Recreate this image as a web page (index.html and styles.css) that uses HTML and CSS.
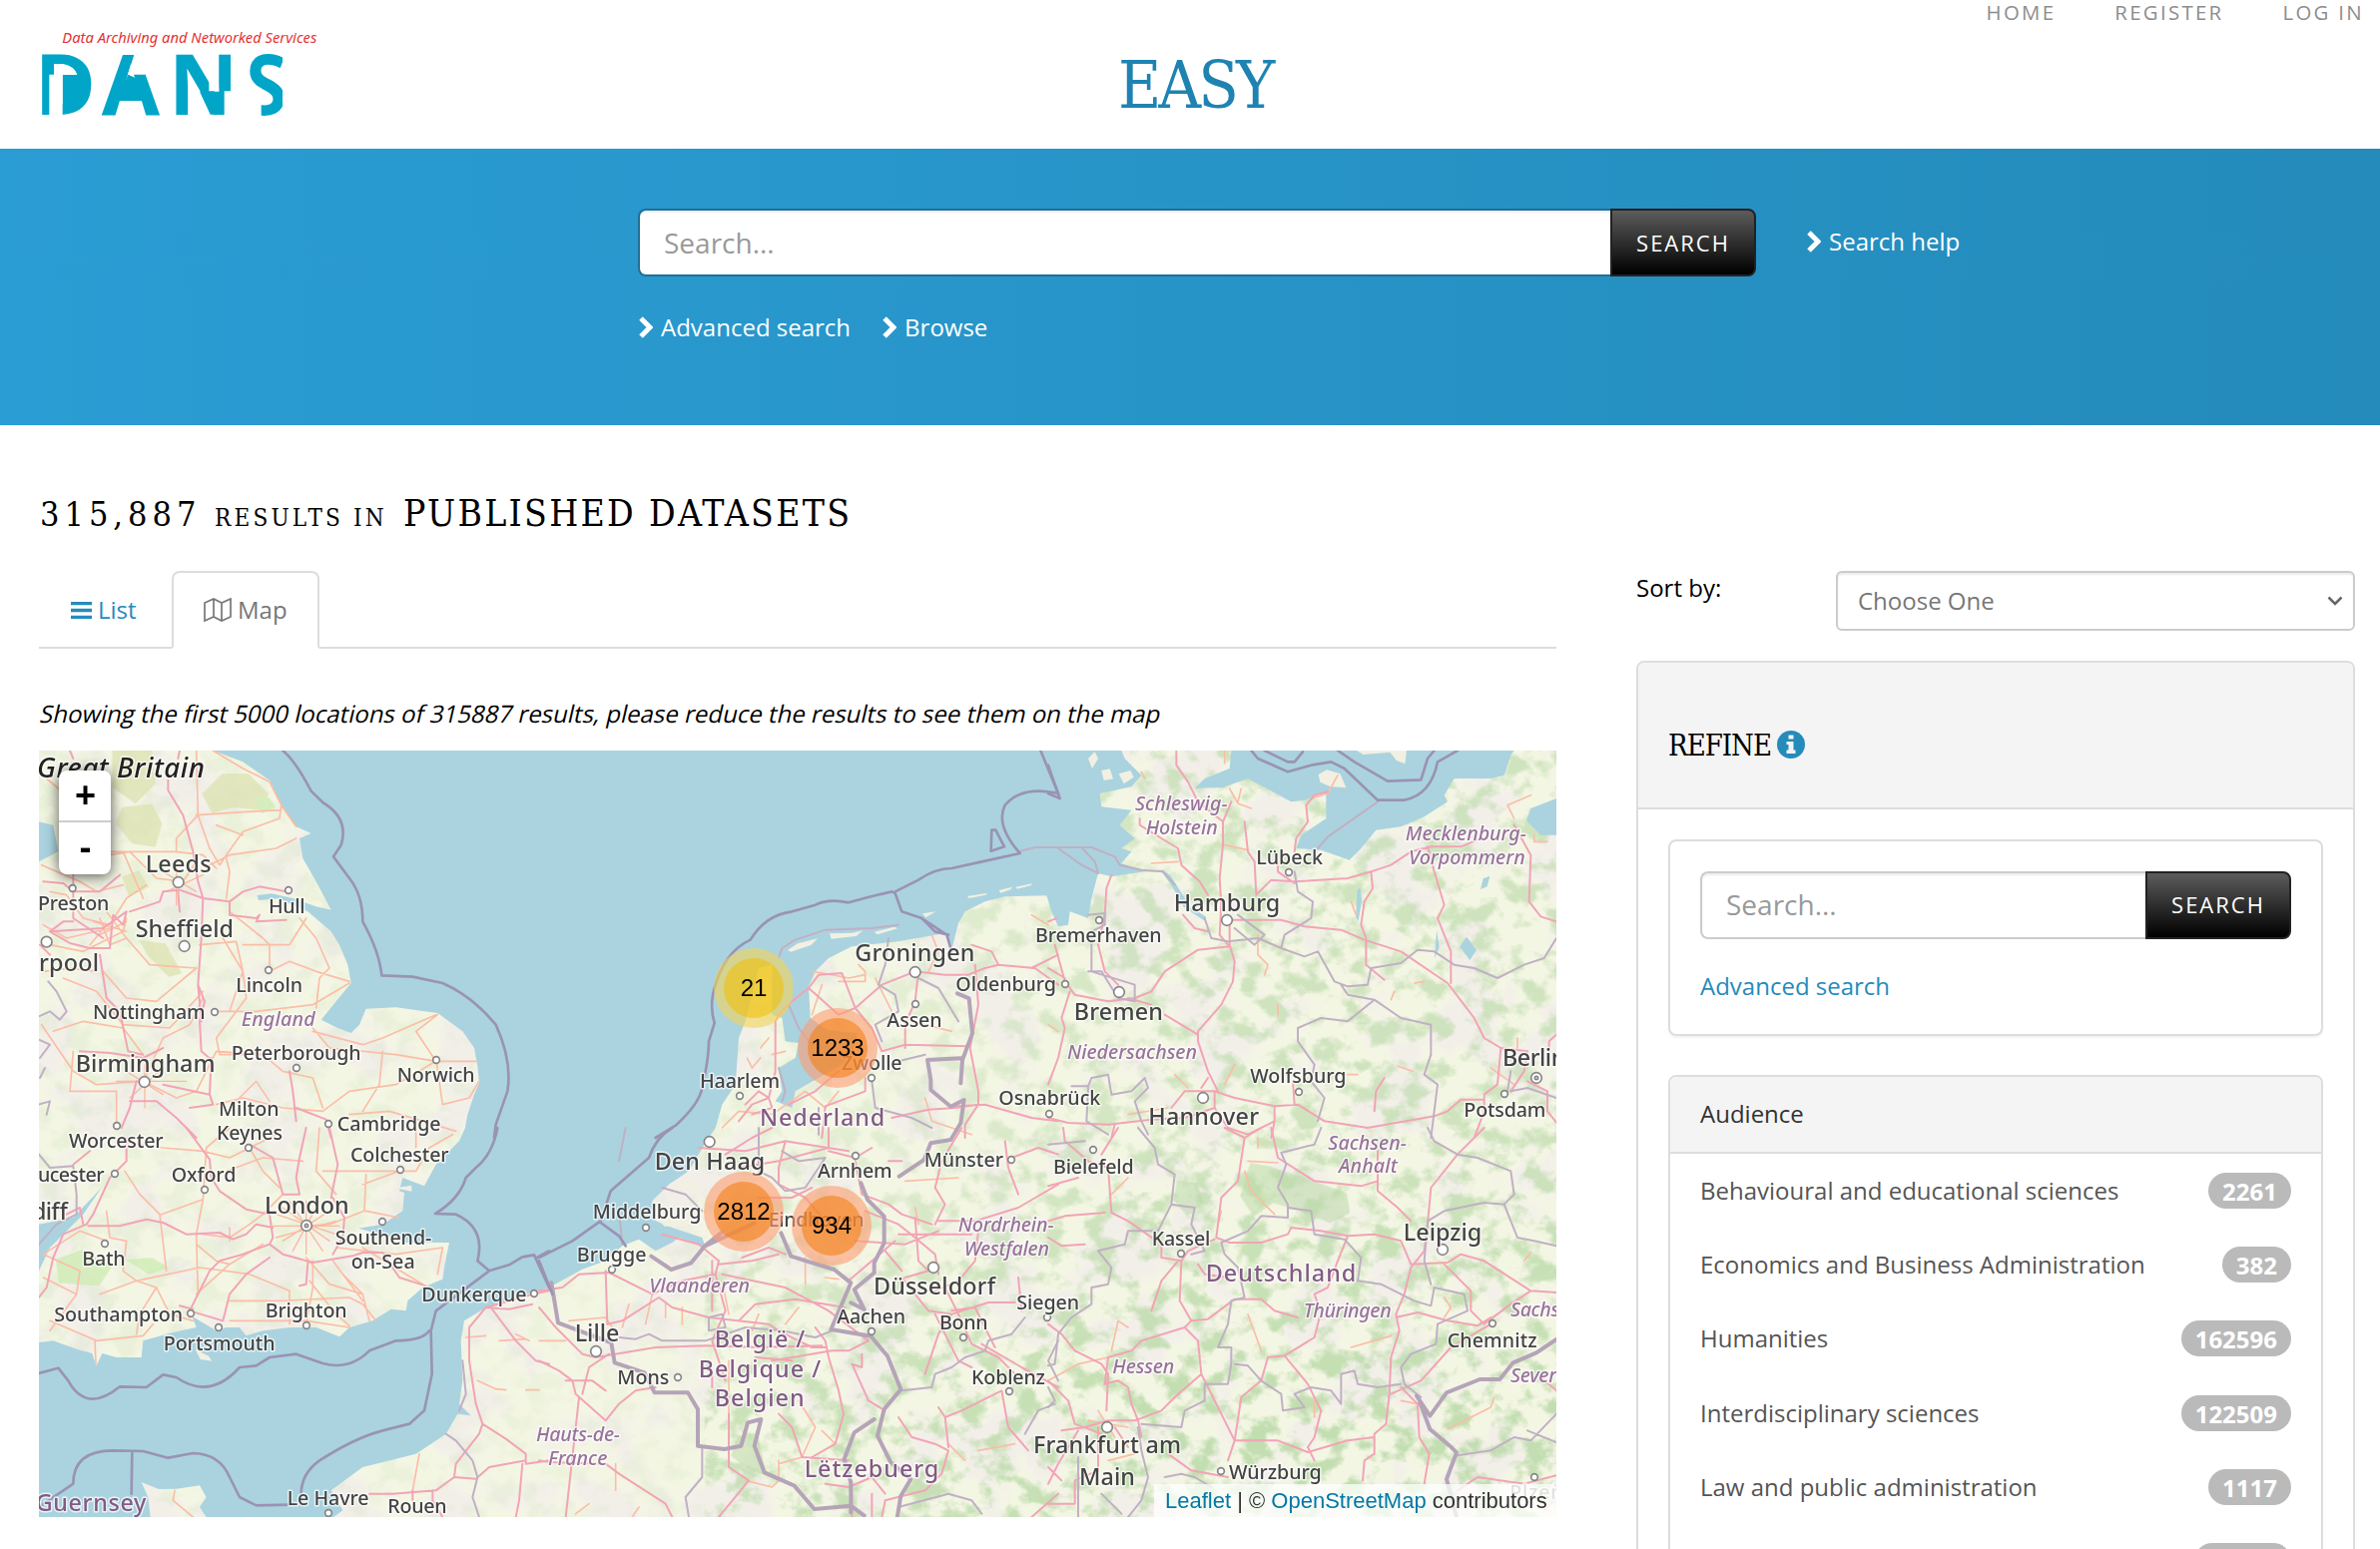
FILE: index.html
```html
<!DOCTYPE html>
<html lang="en">
<head>
<meta charset="utf-8">
<title>EASY - Published datasets</title>
<link rel="stylesheet" href="styles.css">
</head>
<body>
<header class="site-header">
  <svg class="dans" viewBox="0 0 1200 450" role="img" aria-label="DANS">
    <text class="dans-tag" x="187" y="130" textLength="765" lengthAdjust="spacingAndGlyphs">Data Archiving and Networked Services</text>
    <g class="dans-word">
      <text x="104" y="345" textLength="184" lengthAdjust="spacingAndGlyphs">D</text>
      <text x="305" y="345" textLength="175" lengthAdjust="spacingAndGlyphs">A</text>
      <text x="506" y="345" textLength="210" lengthAdjust="spacingAndGlyphs">N</text>
      <text x="739" y="345" textLength="124" lengthAdjust="spacingAndGlyphs">S</text>
    </g>
    <path class="dans-fill" d="M188 225H242V310L215 330H188zM352 303L385 224L420 240L428 303zM600 275H672V344H632z"/>
    <path class="dans-cut" d="M148 224H162V192H190Q222 198 232 224H188V348H148zM405 158L384 224H437L446 158zM674 274H696V350H674zM653 160H628V274H653zM736 275H785V352H736zM849 150H870V352H849z"/>
  </svg>
  <div class="easy">EASY</div>
  <nav class="top-nav"><a>HOME</a><a>REGISTER</a><a>LOG IN</a></nav>
</header>

<section class="band">
  <div class="band-main">
    <div class="search-group search-big"><div class="field">Search...</div><div class="btn">SEARCH</div></div>
    <div class="band-links">
      <a><svg class="chev" viewBox="0 0 14 22"><path d="M2 2L11 11L2 20"/></svg>Advanced search</a>
      <a><svg class="chev" viewBox="0 0 14 22"><path d="M2 2L11 11L2 20"/></svg>Browse</a>
    </div>
  </div>
  <a class="help"><svg class="chev" viewBox="0 0 14 22"><path d="M2 2L11 11L2 20"/></svg>Search help</a>
</section>

<h1 class="title"><span class="count">315,887</span><span class="small">RESULTS IN</span><span class="what">PUBLISHED DATASETS</span></h1>

<main class="columns">
  <section class="results">
    <div class="tabs">
      <a class="tab"><svg class="i-list" viewBox="0 0 21 17"><path d="M0 1.5H21M0 8.5H21M0 15.5H21"/></svg>List</a>
      <a class="tab active"><svg class="i-map" viewBox="0 0 28 24"><path d="M1 5L10 1L18 5L27 1V19L18 23L10 19L1 23zM10 1V19M18 5V23"/></svg>Map</a>
    </div>
    <p class="note">Showing the first 5000 locations of 315887 results, please reduce the results to see them on the map</p>
    <div class="map">
      <svg class="tiles" viewBox="0 0 4560 2304">
        <defs>
          <filter id="wood" x="0" y="0" width="100%" height="100%" color-interpolation-filters="sRGB"><feTurbulence type="fractalNoise" baseFrequency=".013 .015" numOctaves="5" seed="7"/><feColorMatrix values="0 0 0 0 .74  0 0 0 0 .86  0 0 0 0 .67  5 0 0 0 -2.35"/></filter>
          <filter id="moor" x="0" y="0" width="100%" height="100%" color-interpolation-filters="sRGB"><feTurbulence type="fractalNoise" baseFrequency=".005" numOctaves="4" seed="21"/><feColorMatrix values="0 0 0 0 .949  0 0 0 0 .937  0 0 0 0 .914  0 7 0 0 -3.4"/></filter>
          <linearGradient id="fade"><stop offset="0" stop-color="#333"/><stop offset=".38" stop-color="#222"/><stop offset=".56" stop-color="#444"/><stop offset=".75" stop-color="#aaa"/><stop offset="1" stop-color="#aaa"/></linearGradient>
          <linearGradient id="south" x2="0" y2="1"><stop offset=".45" stop-color="#fff" stop-opacity="0"/><stop offset=".85" stop-color="#fff" stop-opacity=".7"/></linearGradient>
          <mask id="woodmask"><rect width="4560" height="2304" fill="url(#fade)"/><rect x="2000" width="2560" height="2304" fill="url(#south)"/></mask>
        </defs>
        <rect class="land" width="4560" height="2304"/>
        <rect width="4560" height="2304" filter="url(#moor)"/>
        <g mask="url(#woodmask)"><rect width="4560" height="2304" filter="url(#wood)"/></g>
        <g class="moss">
          <path d="M220 0h120l10 100-60 60-70-50zM250 170l90-10 30 60-20 70-70-10-50-60zM490 130l60-60 80 0 60 60-20 50-90-10-60 20zM300 570l80 10 50 90-40 10-60-60zM250 380l50-20 30 50-60 30z"/>
          <path class="g" d="M50 1530l80-30 90 50-40 60-120-10zM260 1530l80-5 50 30-60 20zM650 140l40 0 20 30-40 20z"/>
          <path class="w" d="M3640 1240l60 10 120 40 110 40 10 60-60 30-100-40-70-20-60 40-40-60zM3420 1290l60 10 20 60-50 40-40-50zM2100 2060l60-10 10 60 20 70-60-20-50-40z"/>
        </g>

        <!-- North Sea, the Channel, and the Baltic -->
        <g class="sea">
          <path d="M523 0L613 34L693 89L728 164L773 229L818 249L783 264L793 324L833 394L878 479L833 469L765 445L700 430L655 435L660 450L720 445L808 484L843 514L878 544L903 584L928 644L938 699L893 754L848 809L898 834L938 849L963 824L983 776L1073 772L1198 789L1273 844L1308 894L1318 949L1323 999L1308 1034L1288 1094L1281 1134L1263 1174L1193 1244L1158 1309L1093 1284L1083 1324L1098 1329L1093 1384L1033 1424L960 1436L1063 1464L1103 1479L1233 1479L1218 1554L1213 1589L1153 1614L1108 1654L1103 1684L1058 1679L1003 1714L933 1734L903 1762L833 1734L753 1734L673 1744L623 1759L603 1734L563 1734L533 1744L460 1700L473 1734L403 1749L313 1774L308 1824L233 1824L190 1812L172 1850L160 1812L113 1799L43 1774L0 1779V2304H335L328 2244L308 2199L360 2220L413 2219L483 2209L503 2244L483 2274L503 2304H885L913 2284L878 2224L973 2154L1133 2114L1223 2054L1258 1994L1298 1999L1263 1964L1273 1894L1268 1774L1278 1714L1353 1669L1533 1614L1633 1559L1703 1534L1753 1489L1803 1469L1853 1504L1903 1479L1923 1464L1983 1484L2003 1494L1993 1464L1903 1434L1853 1414L1843 1354L1893 1304L1953 1264L2003 1179L2033 1134L2053 1064L2093 1004L2103 864L2123 814L2163 654L2203 644V794L2233 804L2243 874L2283 879L2273 924L2223 954L2233 1024L2213 1054L2263 1074L2273 1024L2350 980L2440 930L2460 850L2370 840L2318 804L2313 709L2333 664L2373 624L2443 589L2583 574L2723 549L2745 590L2763 519L2783 484L2843 454L2903 439L3028 436L3043 484L3063 529L3093 524L3098 484L3153 504L3163 444L3183 369L3223 379L3323 364L3373 364L3403 404L3440 470L3500 510L3508 500L3460 470L3400 375L3378 359L3313 359L3253 339L3283 304L3253 294L3293 264L3248 224L3283 179L3193 169L3188 129L3283 109L3313 74L3263 24L3253 0z"/>
          <path d="M3583 0L3578 54L3503 84L3473 114L3560 110L3633 84L3763 154L3803 149L3850 130L3868 129V204L3793 254L3778 294L3853 299L3938 329L3973 294L4018 239L4093 229L4163 199L4233 154L4223 134L4253 84L4363 84L4403 74L4423 14L4433 0zM4483 174L4560 144V254L4513 254L4470 210zM0 214L43 224L58 304L0 334zM0 1424L103 1404L188 1314L133 1394L33 1494L0 1564zM3962 420l8-8 5 40-10 60-8-10zM4290 560l30 40-20 30-30-40zM4340 385l20-8-8 32-20 8zM4200 540l8 50-14 36z"/>
        </g>
        <g class="island">
          <path d="M3845 72L3870 58L3910 70L3928 112L3880 108L3850 95zM3153 24l20-20 10 20-18 30zM3193 60l25-5 10 30-28 5zM3245 70l35-10 10 20-30 20zM3960 0L4110 0L4105 40L4080 30L4060 5L3980 12zM2250 600l30-20 60-15-20 20-60 20zM2376 550l70-2 30-8-20 18-75 8zM2510 545l60-15 10 5-60 18zM2655 490l40-6-30 18zM2790 438l60-10-5 6-50 10zM2885 420l40-10-5 8-30 10zM2935 410l50-10-5 6-40 10zM470 1800l40 20 10 15-35-5zM1070 1315l50-8v18zM1850 1400l60-30 60 20-20 40-70 0zM1895 1310l70-20 30 50-70-20z"/>
        </g>

        <!-- trunk roads -->
        <g class="orange">
          <g transform="translate(-27 -36)"><path d="M500 36L505 230L540 330L570 380L590 350L640 280L750 240L755 200L800 265M505 230L440 300L440 340L240 340M500 230L650 220L755 215M550 36L640 90L720 130L755 200M540 380L600 350L740 330L800 300M590 360L600 400L590 480M280 340L340 480M500 370L460 430L380 420L300 340L240 350M440 340L520 350L560 390M600 520L700 600L720 620V700L780 670L860 700L960 730M860 810L870 720L900 690L860 600L810 540M640 620H780L830 540M510 620L620 610L640 700L600 820M560 820L680 820L850 800L960 735M580 600L640 700L650 780L560 900L570 950L700 950M290 600L360 680L500 690M220 700L290 780L380 790L500 690M100 720L200 760L280 860L420 870L520 760M70 880L160 850L280 870L340 950M35 860L130 1000L200 1040L340 1030M130 940L120 1060L260 1060V1160M340 1030L400 900L480 860L520 780M340 1030L440 1080L500 1060L560 940L700 950L760 1000L850 1020L880 1110M560 1100L640 1080L760 1110L880 1120L960 1060L1100 1040L1220 970L1340 970M1220 970L1160 880L1225 830M850 880L1000 920L1060 900L1220 830M1060 940L1050 1040L1000 1120M1220 960L1240 1100L1320 1080L1350 1030M1220 970L1100 950L900 930L850 870M960 1130L1080 1120L1280 1180M560 260L640 290M50 120L120 180L90 230M35 380L150 430L200 460L280 440M60 460L110 470L160 540L240 560L290 480L350 440M40 560L110 600L240 570M60 620L160 640L280 580L290 540M210 540L240 620L290 600M230 560L180 620M40 700L120 690L200 700"/><path class="mesh" d="M230 520L290 600M210 590L290 550M190 550L290 580M400 400L500 460M410 460L520 410M440 380V500M290 1000L400 1070M300 1080L400 990M345 980V1110M260 1030H470M620 1090L680 1030L720 1090"/></g>
          <g transform="translate(-27 1134)"><path d="M285 130L330 200L390 260L410 430M395 260L520 215L530 60L600 0M520 215L500 320L505 500M270 40L400 60L520 70L600 90L660 60L740 20M660 60L700 130L750 180M590 130L700 90L820 100M870 0L860 130L920 200M880 130H1160L1200 60L1270 20M1010 140L1005 250L900 290L830 295M1160 0V60M1000 170L1110 130M760 200L700 260L660 290L600 330L520 320M230 340L150 310L40 380L150 430L140 500L40 450M230 250L240 330L290 340L280 430L320 460L510 420L660 440L780 490V590M210 500L320 460L380 480L420 560L490 580M380 480L330 560L320 620M60 580L200 640L340 625L370 590M195 640L198 710M140 500L60 610M600 580H830L960 600M850 400V480L830 590M840 460L920 560L960 595M600 520L750 520L960 510L1000 530L1040 580M910 400L1000 520M1000 360L1130 440L1180 470M920 360L1100 380L1240 360L1225 440M1020 580L1000 500L940 440M600 340L600 300M500 350L560 400L600 410M700 350L600 410L500 500M830 390L900 470L1000 500M1310 630L1370 625M1410 640L1490 635M1460 620L1500 640M1345 760L1400 785L1430 788M1490 788H1530M1170 980L1150 1090M435 1090L430 1120L490 1170M1110 270L1010 250"/><path class="mesh" d="M760 240L900 340M760 340L900 250M830 220V380M730 295H930M780 220L880 370M740 330L920 280M740 260L920 320M790 370L870 220"/></g>
          <g transform="translate(1503 -36)"><path d="M665 960L640 990L625 960M740 940L700 950M690 900L665 930M820 700L880 710L930 720L980 710M900 730H980V700L960 680M1010 720L1060 820M1180 590L1200 640L1170 700M820 830L850 740M1120 850L1240 880M550 1170L600 1120L700 1130L800 1060L860 1110L900 1060M1160 1080L1180 1150L1300 1190M1480 530L1530 560M1530 860L1560 880"/></g>
          <g transform="translate(1503 1134)"><path d="M520 470V540M90 580L200 570L220 600M270 530L250 600M340 500L320 590M380 530V570M430 540V590M550 460L570 560M640 610L660 560M800 390V470M860 450L900 455M720 1000V1060L700 1080L620 1060M230 1010V1090M720 1010L790 990L830 900L780 820M570 700V860M850 910L890 950M1100 160L1260 150M1130 240L1140 290M1320 970L1430 950M1280 1000L1230 950M150 1130L110 1160M780 540L740 590M0 640H80M300 1140L280 1170"/></g>
          <g transform="translate(3033 -36)"><path d="M545 150L570 195L610 210M580 150L570 190M530 36V75M280 100L290 120M530 320L600 335M310 375L390 370M630 590V650L660 680L650 710M870 110L840 165L790 180M910 490L925 530M690 800L690 835M1050 985L1095 1000M1130 730L1100 735M1040 760L1030 785M1380 200L1450 170M1380 200L1400 240M1460 290V310H1500M530 1040L560 980M380 1010L420 1050M240 1130L360 1110M900 1010H930M1330 990L1400 1040M1410 900V930"/></g>
          <g transform="translate(3033 1134)"><path d="M240 150L190 200M600 100L690 105M590 130L610 190L680 260M630 30V60M520 250L510 290M210 580L190 670M210 580L240 600M600 560L640 670M910 660L1030 625M0 760L90 710L180 690M1340 810L1330 840L1200 905M1190 510L1210 540L1190 570M1430 400L1450 375M120 880L240 900M150 850L200 930M180 1000L260 980M1060 820L1110 830M800 870V820M1490 1150L1540 1100"/></g>
        </g>

        <!-- motorways -->
        <g class="pink">
          <g transform="translate(-27 -36)"><path d="M415 125V155L460 230L490 340L505 430L520 480L515 600L505 740L525 790L510 850L515 940L545 965M120 36L130 60M450 36L445 60M130 410V540L220 600M40 430L100 435L130 460L210 460L270 410M300 520L390 490L400 460L450 455L520 480L600 490L640 460L690 445L770 460M600 490V530L680 540L690 530L680 550L770 545M290 520L220 570L60 580L100 550L130 550M60 580L120 615L180 630L240 630L250 530L280 560L290 520M445 460L450 520M30 620L60 650M210 650L230 780L270 820L295 940L340 950M150 940L240 945L340 960L400 930M400 1040L540 1070L550 1100L480 1110M320 1030L300 1110L275 1170M300 1090H380L440 1140L500 1200M545 960L540 1070M800 1150L790 1060L780 1000M800 1110L890 1145L905 1200M515 850L505 740"/></g>
          <g transform="translate(-27 1134)"><path d="M470 0L540 95L545 150L570 190L650 245L720 260L730 330L720 350L760 380L850 405L970 385L1000 375H1060L1110 450L1190 475M290 30V100L240 150L190 260L170 290L100 320L70 390L50 480L27 510M180 70L130 110M175 295H270L350 275L400 285L470 320L570 315L610 335L650 320L680 290L730 300M660 50L730 90L760 200H810L800 150L810 90L830 0M900 0L925 110L905 210M910 210L945 270L940 330L910 380M720 350L640 380L570 400L540 430L500 510L480 550L580 580L600 500L650 440L720 390M835 405L830 470L810 475M450 535L490 545M110 260L150 240L160 290M1560 490L1510 500L1370 540L1320 600L1320 700L1340 830L1360 890L1430 935L1490 980V1010L1560 1000M1360 890L1350 920L1280 1010L1275 1050L1340 1055L1380 1020L1490 1000M1385 540L1460 640L1520 700L1560 710M1370 540L1440 545L1510 530M1275 1050L1220 1090L1090 1100L1020 1100M1210 1090V1120L1240 1170M1480 1010L1470 1120L1460 1170M1150 1090V1120"/></g>
          <g transform="translate(1503 -36)"><path d="M710 850L720 830L760 790L810 750L840 710L910 705L950 810L900 830L810 750M950 810L1030 740L1130 700L1220 710M950 810L1000 870L1030 940L1100 920L1290 925M1140 700L1130 790L1100 860V930M710 850V1000L690 1080L640 1100L600 1150M750 1100L830 1060L900 1000M620 1100L660 1060L690 1080L700 1110L640 1130M1220 710H1290L1340 690L1380 680L1490 690L1560 740M1300 620L1360 640L1380 680M1310 680L1320 800L1295 930L1320 1060V1100L1250 1110L1170 1115L1060 1140M1250 1105L1340 1100L1480 1140L1560 1150M1320 1100L1280 1160V1200M1480 690L1560 650M980 1020V1060L860 1105L850 1200"/></g>
          <g transform="translate(1503 1134)"><path d="M0 490L70 480L120 440L210 435L340 500L430 460L530 440L540 400L480 350L370 320M200 430L205 590L250 580L360 510L400 540L510 570L690 590L720 610L820 660L860 660M0 540L50 600L130 680L170 690L350 660L500 655L660 660L850 655M520 400V550M530 440L560 550L520 640L560 760M550 440L740 480L870 550L990 640L930 670H880L700 700M600 580L650 530L770 515L920 540M830 600L860 640L870 690L900 790L915 860L890 950L820 990M720 860L760 900L790 990L930 1000M610 390L690 360L740 380M540 410L640 400L720 380M480 60L620 70L740 40L930 70M600 120L720 100L870 60V0M740 40L720 120L720 170L800 210L860 280M560 80L640 30L700 0M660 210H760L820 180M870 70L950 90L1000 60M1050 100H1090M950 100L970 200L1050 230L1090 260L1180 290M980 250L1080 290L1130 330L1190 380L1200 440M1130 270L1140 400L1170 430L1100 450M1080 320H1300M1200 280H1310L1440 240L1560 170M1190 290L1220 230L1190 180L1210 100L1270 0M1400 40L1410 120L1440 200M1420 90L1500 60L1560 80M1320 310L1310 400L1260 460L1190 490M1040 370L1090 430M950 340L1100 350L1200 310M930 460L1070 340M1090 450L1170 550L1240 560L1200 620L1160 740M1240 560L1350 525H1430M1220 480L1260 560L1300 650L1380 690L1430 740M1190 560L1260 700L1300 720M1240 550L1310 540L1370 660M970 680L970 720L940 710L990 820L1040 850M0 700L60 730L100 760L110 800L200 880L240 830L290 790L350 780M80 760H160L200 790M120 810L90 1080L80 1170M210 680L150 720L130 800M0 1000L30 1005L200 1010L240 1040L380 1130L400 1170M520 740V780M570 860V1020L630 1060L540 1170M1080 870L1120 930L1190 950L1230 970L1210 1040L1160 1090L1040 1120L1030 1170M1200 840L1220 870L1270 850L1390 790L1410 900L1470 970M1220 870L1230 960M860 1070L930 1080L1000 1050L1040 1100M940 1100V1170M1000 1100V1170M1330 650L1450 720L1560 780M1480 1170L1560 1100M1440 450L1450 550M650 690L760 700"/></g>
          <g transform="translate(3033 -36)"><path d="M385 36V80L420 130L450 190L525 250L525 320L515 420L520 500L515 590L540 620M550 190L525 250M275 240V260L340 300L390 330L400 380L455 430L480 470M590 250L600 340L620 370L625 470L670 425L740 430L900 420L970 400L1030 380L1090 340L1150 325H1240L1300 300M740 340L745 300L780 250L775 200L800 170L840 160M690 370V400L740 435M970 400L975 450L950 490L940 560L955 600V680L1010 725M550 545H700L770 565L880 575L950 605L1060 640L1200 735L1280 840L1310 900L1360 930L1350 1040L1310 1070V1120M1140 325L1160 400L1190 500L1170 540L1210 640V735M1400 260L1450 350L1445 490L1480 535L1527 550M545 545V620L560 670L555 730L520 800L450 880V910L480 1000L510 1060M545 625L450 635L350 700L310 760L260 780L180 790L80 770L50 730L20 620M190 410L175 450L170 530L150 620L170 700L210 740M240 780L310 800M350 830L400 860L450 890M65 760L40 840L50 870L30 960L0 1040M0 690L50 720M405 530L440 570L480 580M370 1110L410 1060H500L560 1080L680 1105L750 1100L830 1150L960 1170L1160 1135L1200 1120L1240 1085H1310M740 1100L735 1030M980 1120L985 1060L1010 1020M0 1140L60 1155L180 1160L310 1145L410 1140L500 1110M500 1060L500 1110L540 1170L600 1190L680 1150V1105M200 1160L190 1200M480 1020L460 1050M1360 930L1440 940L1430 1000L1390 1060M1440 1030L1500 1060V1120L1540 1170M1527 890L1505 910V940M1310 1120L1280 1200M670 1200L680 1150M0 550L25 540"/></g>
          <g transform="translate(3033 1134)"><path d="M640 0L590 30L570 160L520 210L505 330L545 345L640 345L720 320L730 300L820 310L900 325L980 320L1060 340L1090 410L1200 405L1240 380L1310 400L1450 490L1527 495M530 0L590 30M670 0L690 90L800 160L940 175L990 160V190L1050 240L1090 280M1310 0L1230 80L1150 180L1140 290L1130 370L1090 420L1070 500L1045 560L1055 610L1030 690L1025 800L1015 890L980 920V980L950 1000L945 1060M990 70V160M45 0L50 40L120 100L180 120L190 255L240 280L340 350V390L400 400L420 370L500 335M0 175L90 150M0 280L50 265L170 255M210 0L160 80M400 400L395 520L430 580L480 575L560 515H640L680 550L750 570M390 400L340 460L310 550M430 580L410 600L280 640L250 670L180 690L170 770L210 760L240 780L250 830L270 880M410 600L450 640L460 740L490 800L530 880L560 940L580 810L640 760L660 690L710 685L800 630L815 570M710 685L780 770L820 850L800 930L780 960L800 1000M560 940L690 940L780 975L900 940L980 930M560 940L540 1000M460 740L380 810L340 850L260 880L180 880L110 900L40 910M0 590L40 620L80 670L160 710L180 740L175 850M0 760L60 820L80 890L160 920M900 325L870 400L840 480L800 500L810 530M1190 410L1270 490V550L1310 590L1390 530L1450 490M1045 570L1110 555L1200 580L1290 595L1330 570M1330 590L1210 660L1120 760L1030 800M1060 780L1110 830L1115 930L1145 980L1130 1070M0 330L40 355L110 350M150 900V1030L80 1060V1130H0M90 910L30 1010L0 1070M270 880L280 930M0 1020L40 1060M360 980L430 1030L540 1050M200 900L240 960M1230 1090L1290 1050L1430 1070L1527 1045M1480 750L1527 790M450 410L470 440L540 450"/></g>
        </g>

        <!-- internal borders -->
        <g class="state">
          <g transform="translate(-27 -36)"><path d="M55 730L80 760L110 820L90 845L60 820L27 835M27 905L60 920L30 960M30 1020L45 990M27 1100L60 1090L50 1130"/></g>
          <g transform="translate(-27 1134)"><path d="M27 80L60 120L130 115L140 200V260L80 290L27 350M1250 920L1280 940L1330 1000L1345 1050L1330 1110L1350 1170M1300 700L1310 800L1290 850"/></g>
          <g transform="translate(1503 -36)"><path d="M720 660L730 630L770 605L860 575L1000 570L1080 560M1050 600L1040 680L1020 740L1070 770L1080 820L1010 860L1030 910M1140 720L1200 750L1260 850M750 800L780 870L820 920M720 990L740 1060L730 1090M1080 970L1160 950M1440 340L1490 327H1560M1000 1030L1010 1110L1120 1140L1180 1170M840 1110V1190"/></g>
          <g transform="translate(1503 1134)"><path d="M240 630L290 635L330 620L370 640L500 640L620 600L730 610L830 630L880 610M510 570L550 560L560 600L510 610zM660 0V130L700 150L740 190L800 180L860 90L780 100L730 70M260 0L240 100M250 350L240 250M490 960L490 1050L440 1110L450 1170M1090 790L1180 780L1190 740L1240 720L1280 690L1340 670L1350 640L1420 620L1460 570M1080 1140L1230 1100L1300 1120L1330 1160M1460 920L1500 850L1550 830M1560 640L1530 700L1560 760M370 180L440 200L490 250"/></g>
          <g transform="translate(3033 -36)"><path d="M0 327H130L200 355L215 380L280 395L345 400L380 440M30 330L100 380L150 405L140 370L100 327M990 190L840 295L810 330M740 400L750 460L795 490L790 540L710 590L700 630L770 655L810 640L860 730L900 745L960 740L970 690L1060 675L1110 635L1160 640L1220 680L1280 690L1350 720L1430 680L1490 660L1527 600M470 540L490 600L540 610L630 600L700 630M560 570L620 620L650 590L570 530M880 740L900 770L980 785L1060 840L1150 860V950L1130 1010L1170 1040L1150 1200M980 785L900 850L820 840L750 870V910L800 980L790 1030L830 1080L810 1150M120 530L170 525V560L130 580V700L260 740V790L210 780L160 700L120 700M70 1045L120 1045L130 1020L180 1010L190 1070L250 1060L290 1020L300 1050L260 1090L280 1150L300 1190M120 1050L115 1150L180 1190M1390 1060L1440 1050L1527 1080M1390 1000L1380 1060"/></g>
          <g transform="translate(3033 1134)"><path d="M0 50L110 40M270 0L320 60L330 110L380 140L370 230L440 240L430 290L470 370L430 380M370 230L330 310L240 310L230 350L150 370L190 420L180 470L130 480V530L70 570L30 620L20 710L0 715M820 0L800 50L700 75L715 110L690 180L720 230L720 270L640 265L600 310L520 345L530 380L570 420L590 510L550 520L540 590L510 660L550 660V710L540 770L470 770V820L410 850L400 900L280 890M720 240L790 250L800 320L890 335L940 390L930 460L1000 470L1100 520L1150 535L1160 480L1250 500L1260 550L1170 590L1165 650L1090 680L1060 720L1070 770L1120 810M1140 0L1160 40L1230 80L1290 90L1390 130L1400 200L1370 230L1310 225L1190 250L1140 280L1130 400L1150 470M1370 230L1410 330L1460 340L1527 355M560 710L600 715L640 760L700 800L705 850L770 840L740 800L790 780L850 790L880 830V740L920 730L930 770L990 780L1060 770M0 780L20 820L0 840M1230 985L1330 970L1400 930L1450 940L1527 860M1440 910L1527 945M90 990V1170M270 900L280 970L300 1050L280 1120L240 1170M350 1050L400 1040L440 1050L490 1080M160 1100L220 1160"/></g>
        </g>
        <!-- national borders and territorial waters -->
        <g class="nation">
          <path d="M2760 730L2795 745L2805 850L2775 930L2770 1000M2770 925L2670 930L2680 990L2680 1020L2740 1070L2780 1050L2770 1120L2740 1170L2680 1180L2660 1230L2585 1280M2470 1300L2490 1350L2540 1400L2540 1480L2510 1540L2510 1570L2450 1620L2480 1680L2440 1660M2230 1450L2260 1520L2390 1560L2440 1600L2410 1670L2380 1740L2500 1760L2550 1820L2590 1920L2540 1980L2520 2060L2560 2140L2620 2190L2590 2240L2580 2300M2000 1490L1960 1540L1900 1560L1840 1520M2050 1450L2000 1490L2150 1420M1540 1600L1560 1720L1720 1780L1730 1840L1820 1870L1850 1930L1950 1930L1980 1980L1980 2090L2060 2100L2110 2090L2130 2020L2170 2010L2150 2090L2180 2170L2270 2210L2330 2280L2440 2270L2480 2300M2510 2010L2450 2050L2420 2130L2440 2200L2440 2290"/>
          <path d="M4140 1940L4180 2000L4230 1930L4330 1890L4390 1890L4430 1840L4500 1810L4560 1770M4150 1960L4180 2040L4240 2090L4260 2110L4230 2190L4260 2304"/>
          <g class="water-line">
            <path transform="translate(-27 -36)" d="M760 36Q800 70 845 158L880 192Q960 240 935 320L912 355L960 420Q1000 470 1000 550Q1050 640 1057 712L1150 716L1240 735Q1330 775 1400 860Q1450 970 1435 1060L1400 1160L1395 1200"/>
            <path transform="translate(-27 1134)" d="M1405 0Q1390 80 1340 120L1310 150Q1290 215 1218 258L1280 260Q1370 300 1345 400L1380 430L1220 550L1205 610L1208 740L1185 850L1140 890L1060 910Q980 930 870 1000Q815 1040 815 1100M1380 430L1440 412L1480 388L1515 382L1560 480M1520 392L1560 370M1200 610Q1180 640 1100 640L1020 670Q960 730 880 708L800 680L720 690L680 715L630 720Q540 820 440 750L400 742L350 780L270 778Q170 860 115 760L85 722L27 738M27 1140L130 1070Q130 970 250 970L340 972L415 992L490 978Q570 980 600 1050L630 1110L680 1135L780 1133M307 975L305 1100"/>
            <path transform="translate(1503 -36)" d="M350 1200L410 1163Q480 1100 490 1050Q510 960 510 910L527 855Q510 800 530 740Q560 640 635 605Q680 530 760 520L830 500Q870 480 930 493L1000 474L1060 460L1070 465L1090 520L1150 540L1225 590L1240 640M1070 460L1140 425Q1190 390 1240 390L1330 370L1445 345Q1370 260 1400 200Q1450 140 1560 165L1507 36M1360 275L1358 338L1398 325L1372 275zM1150 540L1190 580L1230 590"/>
            <path transform="translate(1503 1134)" d="M0 390L100 340L185 280L215 190L330 90Q350 30 400 0M185 285L240 325L260 355M0 400L40 500"/>
            <path transform="translate(3033 -36)" d="M0 80L35 180L0 165M610 36L630 60L720 100L790 80L850 70L890 90L990 185H1070Q1150 170 1170 70L1230 36M650 36L720 70H740L765 40M870 36L920 70L1020 128L1120 124L1140 60L1160 36"/>
          </g>
        </g>

        <g class="dots">
          <g class="big"><circle cx="419" cy="396" r="16"/><circle cx="437" cy="588" r="16"/><circle cx="23" cy="575" r="16"/><circle cx="317" cy="996" r="16"/><circle cx="2633" cy="666" r="16"/><circle cx="2015" cy="1176" r="16"/><circle cx="2688" cy="1554" r="16"/><circle cx="1674" cy="1806" r="16"/><circle cx="3570" cy="510" r="16"/><circle cx="3246" cy="726" r="16"/><circle cx="3498" cy="1044" r="16"/><circle cx="4218" cy="1500" r="16"/><circle cx="3210" cy="2034" r="16"/></g>
          <circle cx="101" cy="414" r="10"/><circle cx="750" cy="420" r="10"/><circle cx="690" cy="660" r="10"/><circle cx="528" cy="786" r="10"/><circle cx="774" cy="954" r="10"/><circle cx="1194" cy="930" r="10"/><circle cx="870" cy="1122" r="10"/><circle cx="234" cy="1128" r="10"/><circle cx="630" cy="1194" r="10"/><circle cx="228" cy="1272" r="10"/><circle cx="498" cy="1320" r="10"/><circle cx="1086" cy="1260" r="10"/><circle cx="1032" cy="1416" r="10"/><circle cx="198" cy="1482" r="10"/><circle cx="456" cy="1692" r="10"/><circle cx="540" cy="1734" r="10"/><circle cx="804" cy="1728" r="10"/><circle cx="1488" cy="1632" r="10"/><circle cx="870" cy="2292" r="10"/><circle cx="2634" cy="762" r="10"/><circle cx="2502" cy="984" r="10"/><circle cx="2106" cy="1038" r="10"/><circle cx="3036" cy="1092" r="10"/><circle cx="2454" cy="1218" r="10"/><circle cx="2922" cy="1230" r="10"/><circle cx="1824" cy="1434" r="10"/><circle cx="1722" cy="1560" r="10"/><circle cx="1920" cy="1884" r="10"/><circle cx="2502" cy="1746" r="10"/><circle cx="2778" cy="1764" r="10"/><circle cx="3030" cy="1704" r="10"/><circle cx="2916" cy="1926" r="10"/><circle cx="3186" cy="510" r="10"/><circle cx="3084" cy="702" r="10"/><circle cx="3756" cy="366" r="10"/><circle cx="3786" cy="1026" r="10"/><circle cx="4404" cy="1032" r="10"/><circle cx="3168" cy="1200" r="10"/><circle cx="3432" cy="1512" r="10"/><circle cx="4368" cy="1722" r="10"/><circle cx="3552" cy="2166" r="10"/><circle cx="4494" cy="2184" r="10"/>
          <g class="capital"><circle cx="804" cy="1428" r="16"/><circle cx="804" cy="1428" r="5"/><circle cx="4500" cy="984" r="16"/><circle cx="4500" cy="984" r="5"/></g>
        </g>

        <g class="labels">
          <text class="gb" x="-6" y="81" textLength="504">Great Britain</text>
          <g class="city">
            <text x="320" y="367" textLength="198">Leeds</text><text x="290" y="560" textLength="295">Sheffield</text><text x="0" y="662" textLength="180">rpool</text><text x="110" y="967" textLength="420">Birmingham</text><text x="678" y="1391" textLength="254">London</text><text x="-21" y="1410" textLength="108">diff</text>
            <text x="2452" y="634" textLength="360">Groningen</text><text x="1850" y="1260" textLength="332">Den Haag</text><text x="2508" y="1636" textLength="366">Düsseldorf</text><text x="1610" y="1775" textLength="134">Lille</text><text x="3410" y="482" textLength="320">Hamburg</text><text x="3110" y="809" textLength="268">Bremen</text><text x="3334" y="1126" textLength="332">Hannover</text><text x="4398" y="948" textLength="190">Berlin</text><text x="4100" y="1474" textLength="236">Leipzig</text><text x="2988" y="2112" textLength="444">Frankfurt am</text><text x="3126" y="2207" textLength="168">Main</text>
          </g>
          <g class="town">
            <text x="-3" y="481" textLength="214">Preston</text><text x="690" y="488" textLength="110">Hull</text><text x="592" y="726" textLength="200">Lincoln</text><text x="162" y="808" textLength="338">Nottingham</text><text x="578" y="931" textLength="390">Peterborough</text><text x="1076" y="997" textLength="234">Norwich</text><text x="540" y="1097" textLength="182">Milton</text><text x="534" y="1169" textLength="198">Keynes</text><text x="896" y="1144" textLength="312">Cambridge</text><text x="90" y="1194" textLength="284">Worcester</text><text x="936" y="1236" textLength="296">Colchester</text><text x="-3" y="1295" textLength="200">ucester</text><text x="398" y="1295" textLength="194">Oxford</text><text x="130" y="1549" textLength="130">Bath</text><text x="890" y="1484" textLength="290">Southend-</text><text x="938" y="1557" textLength="192">on-Sea</text><text x="46" y="1715" textLength="386">Southampton</text><text x="374" y="1802" textLength="336">Portsmouth</text><text x="680" y="1703" textLength="246">Brighton</text><text x="1150" y="1657" textLength="316">Dunkerque</text><text x="746" y="2268" textLength="246">Le Havre</text><text x="1048" y="2292" textLength="178">Rouen</text>
            <text x="2755" y="724" textLength="302">Oldenburg</text><text x="2548" y="832" textLength="166">Assen</text><text x="2412" y="959" textLength="182">Zwolle</text><text x="1986" y="1014" textLength="240">Haarlem</text><text x="2884" y="1066" textLength="306">Osnabrück</text><text x="2340" y="1284" textLength="224">Arnhem</text><text x="2660" y="1250" textLength="238">Münster</text><text x="1664" y="1408" textLength="326">Middelburg</text><text x="2192" y="1432" textLength="288">Eindhoven</text><text x="1616" y="1535" textLength="210">Brugge</text><text x="2398" y="1722" textLength="206">Aachen</text><text x="2706" y="1739" textLength="146">Bonn</text><text x="2938" y="1679" textLength="188">Siegen</text><text x="1738" y="1905" textLength="156">Mons</text><text x="2802" y="1904" textLength="222">Koblenz</text>
            <text x="2994" y="577" textLength="380">Bremerhaven</text><text x="3658" y="341" textLength="200">Lübeck</text><text x="3640" y="1000" textLength="288">Wolfsburg</text><text x="4282" y="1102" textLength="246">Potsdam</text><text x="3048" y="1273" textLength="242">Bielefeld</text><text x="3344" y="1487" textLength="176">Kassel</text><text x="4232" y="1793" textLength="270">Chemnitz</text><text x="3576" y="2190" textLength="278">Würzburg</text><text class="pale" x="4420" y="2250" textLength="160">Plzeň</text>
          </g>
          <g class="region">
            <text x="608" y="828" textLength="222">England</text><text x="3294" y="180" textLength="278">Schleswig-</text><text x="3326" y="252" textLength="216">Holstein</text><text x="4106" y="270" textLength="364">Mecklenburg-</text><text x="4116" y="342" textLength="350">Vorpommern</text><text x="3090" y="928" textLength="390">Niedersachsen</text><text x="3874" y="1200" textLength="236">Sachsen-</text><text x="3906" y="1270" textLength="176">Anhalt</text><text x="2762" y="1445" textLength="288">Nordrhein-</text><text x="2780" y="1517" textLength="256">Westfalen</text><text x="1834" y="1629" textLength="302">Vlaanderen</text><text x="1494" y="2076" textLength="252">Hauts-de-</text><text x="1530" y="2148" textLength="178">France</text><text x="3800" y="1703" textLength="264">Thüringen</text><text x="3226" y="1871" textLength="186">Hessen</text><text x="4422" y="1702" textLength="210">Sachsen</text><text x="4422" y="1900" textLength="170">Severo</text>
          </g>
          <g class="country">
            <text x="2166" y="1128" textLength="376">Nederland</text><text x="2030" y="1793" textLength="272">België /</text><text x="1982" y="1883" textLength="368">Belgique /</text><text x="2030" y="1972" textLength="270">Belgien</text><text x="3506" y="1596" textLength="452">Deutschland</text><text x="2300" y="2184" textLength="404">Lëtzebuerg</text><text x="-10" y="2286" textLength="332">Guernsey</text>
          </g>
        </g>
      </svg>
      <div class="zoom"><a>+</a><a>-</a></div>
      <div class="cluster yellow" style="left:676px;top:198px"><span>21</span></div>
      <div class="cluster" style="left:760px;top:258px"><span>1233</span></div>
      <div class="cluster" style="left:666px;top:422px"><span>2812</span></div>
      <div class="cluster" style="left:754px;top:436px"><span>934</span></div>
      <div class="credit"><a>Leaflet</a> | © <a>OpenStreetMap</a> contributors</div>
    </div>
  </section>

  <aside class="side">
    <div class="sort"><label>Sort by:</label><div class="select">Choose One<svg viewBox="0 0 16 10"><path d="M1.5 1.5L8 8L14.5 1.5"/></svg></div></div>
    <div class="refine">
      <div class="refine-head">REFINE<svg viewBox="0 0 28 28"><circle cx="14" cy="14" r="14"/><path d="M11.5 4.5H16.5V8.5H11.5zM9.5 11H16.5V19.5H18.5V23H9.5V19.5H11.5V14H9.5z"/></svg></div>
      <div class="refine-body">
        <div class="card find">
          <div class="search-group"><div class="field">Search...</div><div class="btn">SEARCH</div></div>
          <a>Advanced search</a>
        </div>
        <div class="card facet">
          <div class="facet-head">Audience</div>
          <ul>
            <li>Behavioural and educational sciences<b>2261</b></li>
            <li>Economics and Business Administration<b>382</b></li>
            <li>Humanities<b>162596</b></li>
            <li>Interdisciplinary sciences<b>122509</b></li>
            <li>Law and public administration<b>1117</b></li>
            <li><b class="wide"></b></li>
          </ul>
        </div>
      </div>
    </div>
  </aside>
</main>
</body>
</html>
```
FILE: styles.css
```css
* { box-sizing: border-box; }
html, body { height: 1552px; overflow: hidden; }
body { margin: 0; background: #fff; color: #000; font: 24px/34px "Open Sans", "Noto Sans", sans-serif; }
a { color: #258bbb; }

.site-header { height: 149px; display: grid; grid-template-columns: 1120px 1fr auto; overflow: hidden; }
.dans { width: 400px; height: 150px; }
.dans-tag { font: italic 43px "Noto Sans", sans-serif; fill: #e63232; }
.dans-word { font: bold 255px "Open Sans", sans-serif; fill: #00a5c8; }
.dans-fill { fill: #00a5c8; }
.dans-cut { fill: #fff; }
.easy { font: 66px/80px "DejaVu Serif"; font-stretch: condensed; letter-spacing: -3px; color: #1f83b2; padding-top: 46px; }
.top-nav { display: flex; gap: 59px; padding-right: 16px; font-size: 20.4px; line-height: 24px; letter-spacing: 2.3px; }
.top-nav a { color: #8d8d8d; }

.band { height: 277px; display: flex; padding: 60px 0 0 639px; background: linear-gradient(90deg, #2a9dd4, #248bbb); }
.band-main { width: 1120px; }
.search-group { display: flex; height: 68px; }
.field { flex: 1; background: #fff; border: 2px solid #ccc; border-right: 0; border-radius: 8px 0 0 8px; padding-left: 24px; font-size: 28px; line-height: 64px; color: #999; box-shadow: inset 0 2px 2px rgba(0,0,0,.08); }
.search-big .field { border-color: #1f7099; }
.btn { width: 146px; border: 2px solid #222; border-radius: 0 8px 8px 0; background: linear-gradient(#5c5c5c, #000); color: #fff; font-size: 22px; line-height: 65px; letter-spacing: 2px; text-align: center; }
.band-links { display: flex; gap: 31px; margin-top: 34px; }
.band a { color: #fff; display: flex; align-items: center; height: 34px; }
.chev { width: 14px; height: 22px; margin: 0 8px 0 1px; fill: none; stroke: #fff; stroke-width: 5; }
.help { margin: 16px 0 0 50px; }

.title { margin: 0; height: 146px; padding: 67px 0 0 40px; display: flex; align-items: baseline; font: 37px/44px "DejaVu Serif"; font-stretch: condensed; }
.count { font-size: 34px; width: 175px; letter-spacing: 5px; }
.small { font-size: 24px; width: 189px; letter-spacing: 3.2px; white-space: nowrap; }
.what { font-size: 37px; letter-spacing: 2.3px; white-space: nowrap; }

.columns { display: flex; padding: 0 25px 0 39px; justify-content: space-between; }
.results { width: 1520px; }
.tabs { display: flex; height: 78px; border-bottom: 2px solid #ddd; }
.tab { display: flex; align-items: center; width: 133px; height: 78px; border: 2px solid transparent; padding-left: 30px; }
.tab.active { width: 148px; border-color: #ddd; border-bottom-color: #fff; border-radius: 8px 8px 0 0; background: #fff; color: #777; }
.i-list { width: 21px; height: 17px; margin-right: 6px; stroke: #258bbb; stroke-width: 3.4; }
.i-map { width: 28px; height: 24px; margin-right: 6px; fill: none; stroke: #777; stroke-width: 1.7; }
.note { margin: 48px 0 20px; width: max-content; white-space: nowrap; transform: skewX(-13deg); transform-origin: 0 25px; }

.map { position: relative; width: 1520px; height: 768px; overflow: hidden; }
.tiles { display: block; width: 1520px; height: 768px; }
.land { fill: #f4f6e4; }
.moss { fill: #dde2b0; opacity: .75; }
.moss .g { fill: #cdebb0; }
.moss .w { fill: #b9d8a6; opacity: .7; }
.sea { fill: #aad3df; }
.island { fill: #f2f0e2; }
.orange, .pink, .state, .nation { fill: none; stroke-linejoin: round; stroke-linecap: round; }
.orange { stroke: #fbbda6; stroke-width: 5; }
.mesh { stroke: #fbb9a0; stroke-width: 4; }
.pink { stroke: #f2a4b5; stroke-width: 6; }
.state { stroke: #c0b0c4; stroke-width: 6; }
.nation { stroke: #b5a4b8; stroke-width: 12; }
.water-line { stroke: #9a93b4; stroke-width: 8; }
.dots { fill: #fff; stroke: #858585; stroke-width: 5; }
.labels { font: 500 59px "Noto Sans", sans-serif; fill: #444; stroke: rgba(255,255,255,.7); stroke-width: 9; stroke-linejoin: round; paint-order: stroke; }
.gb { font-size: 83px; font-style: italic; fill: #222; }
.city { font-size: 70px; }
.region { font-style: italic; fill: #99739b; }
.country { font-size: 70px; fill: #825b84; }
.pale { fill: #888; }

.zoom { position: absolute; left: 20px; top: 20px; width: 52px; border-radius: 8px; background: #fff; box-shadow: 0 2px 14px rgba(0,0,0,.65); }
.zoom a { display: block; height: 52px; font: bold 36px/50px "Liberation Sans", sans-serif; text-align: center; color: #000; padding-left: 1px; }
.zoom a:first-child { border-bottom: 2px solid #ccc; }
.cluster { position: absolute; width: 80px; height: 80px; padding: 10px; border-radius: 50%; background: rgba(253,156,115,.6); }
.cluster span { display: flex; justify-content: center; height: 60px; border-radius: 50%; background: rgba(241,128,23,.6); font: 24px/60px "Liberation Sans", sans-serif; white-space: nowrap; }
.cluster.yellow { background: rgba(241,211,87,.6); }
.cluster.yellow span { background: rgba(240,194,12,.6); }
.credit { position: absolute; right: 0; bottom: 0; height: 33px; width: 403px; padding-left: 11px; background: rgba(255,255,255,.75); font: 22px/34px "Liberation Sans", sans-serif; color: #333; white-space: nowrap; }
.credit a { color: #0078a8; }

.side { width: 720px; }
.sort { display: flex; justify-content: space-between; height: 90px; }
.sort label { line-height: 34px; }
.select { width: 520px; height: 60px; border: 2px solid #ccc; border-radius: 6px; padding: 0 10px 0 20px; display: flex; justify-content: space-between; align-items: center; color: #777; box-shadow: inset 0 2px 2px rgba(0,0,0,.08); }
.select svg { width: 16px; height: 10px; fill: none; stroke: #666; stroke-width: 2.5; }
.refine { border: 2px solid #ddd; border-radius: 8px 8px 0 0; height: 950px; }
.refine-head { height: 147px; padding: 64px 0 0 30px; display: flex; background: #f4f4f4; border-bottom: 2px solid #ddd; font: 29px/38px "DejaVu Serif"; font-stretch: condensed; letter-spacing: -1px; border-radius: 6px 6px 0 0; }
.refine-head svg { width: 28px; height: 28px; margin: 4px 0 0 6px; fill: #258bbb; }
.refine-head path { fill: #f4f4f4; }
.refine-body { padding: 30px; }
.card { border: 2px solid #ddd; border-radius: 8px; }
.find { height: 197px; padding: 30px; box-shadow: 0 2px 2px rgba(0,0,0,.05); margin-bottom: 39px; }
.find .field { line-height: 63px; }
.find .btn { line-height: 63px; }
.find a { display: block; margin-top: 30px; }
.facet-head { height: 77px; line-height: 74px; padding-left: 30px; color: #333; background: #f4f4f4; border-bottom: 2px solid #ddd; border-radius: 6px 6px 0 0; }
.facet ul { list-style: none; margin: 0; padding: 0 30px; }
.facet li { display: flex; justify-content: space-between; align-items: center; height: 74.2px; color: #555; }
.facet b { height: 36px; border-radius: 18px; padding: 0 14px; background: #bababa; color: #fff; line-height: 37px; margin-left: auto; }
.facet .wide { width: 97px; }
```
